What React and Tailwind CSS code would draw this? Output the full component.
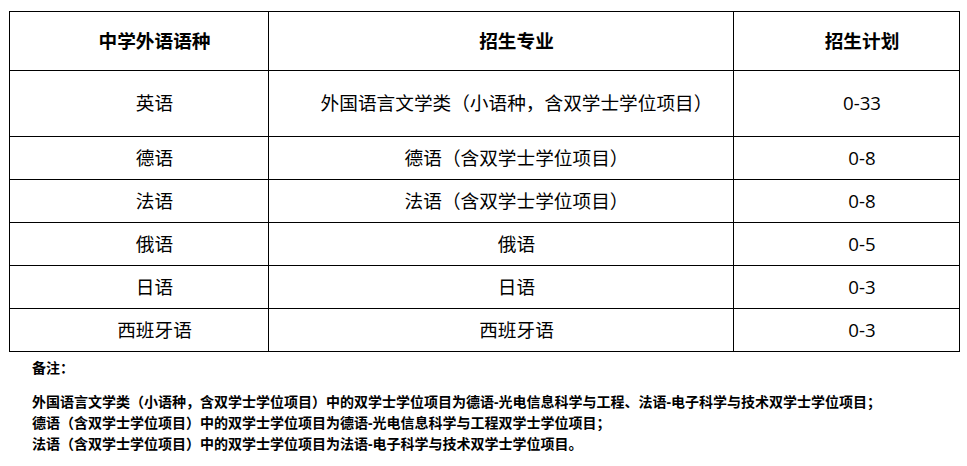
export default function App() {
  const rows = [
    { lang: "英语", major: "外国语言文学类（小语种，含双学士学位项目）", plan: "0-33", h: "h-[66px]" },
    { lang: "德语", major: "德语（含双学士学位项目）", plan: "0-8", h: "h-[43px]" },
    { lang: "法语", major: "法语（含双学士学位项目）", plan: "0-8", h: "h-[43px]" },
    { lang: "俄语", major: "俄语", plan: "0-5", h: "h-[43px]" },
    { lang: "日语", major: "日语", plan: "0-3", h: "h-[43px]" },
    { lang: "西班牙语", major: "西班牙语", plan: "0-3", h: "h-[43px]" },
  ];

  const cell = "border border-black text-center pl-[31px] pr-0 py-0";

  return (
    <div
      className="w-[967px] h-[466px] bg-white text-black overflow-hidden"
      style={{ fontFamily: '"Open Sans", "Noto Sans CJK SC", sans-serif' }}
    >
      <table className="ml-[9px] mt-[11px] w-[950px] table-fixed border-collapse text-[18.67px] leading-none [text-spacing-trim:space-all]">
        <colgroup>
          <col className="w-[259px]" />
          <col className="w-[465px]" />
          <col className="w-[226px]" />
        </colgroup>
        <thead>
          <tr className="h-[59px] font-bold">
            <th className={cell}>中学外语语种</th>
            <th className={cell}>招生专业</th>
            <th className={cell}>招生计划</th>
          </tr>
        </thead>
        <tbody>
          {rows.map((r) => (
            <tr key={r.lang} className={r.h}>
              <td className={cell}>{r.lang}</td>
              <td className={cell}>{r.major}</td>
              <td className={cell}>{r.plan}</td>
            </tr>
          ))}
        </tbody>
      </table>

      <div className="pl-[32px] text-[14px] font-bold leading-[21px]">
        <p className="mt-[5px]">备注：</p>
        <p className="mt-[13px]">
          外国语言文学类（小语种，含双学士学位项目）中的双学士学位项目为德语-光电信息科学与工程、法语-电子科学与技术双学士学位项目；
        </p>
        <p>德语（含双学士学位项目）中的双学士学位项目为德语-光电信息科学与工程双学士学位项目；</p>
        <p>法语（含双学士学位项目）中的双学士学位项目为法语-电子科学与技术双学士学位项目。</p>
      </div>
    </div>
  );
}
